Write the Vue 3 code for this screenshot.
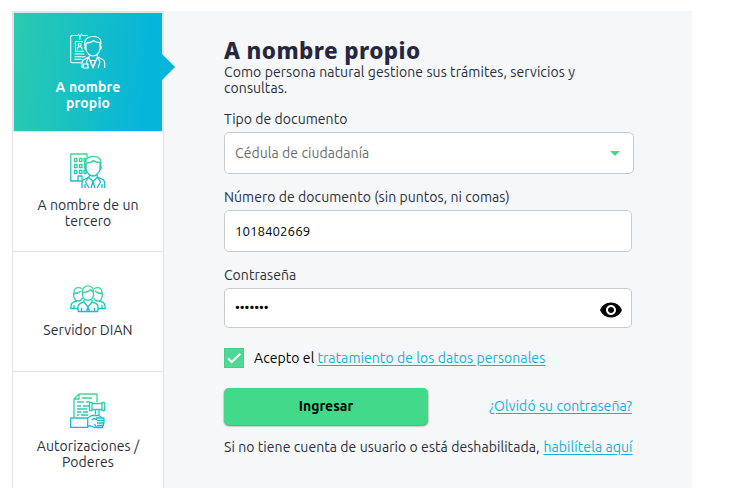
<script setup>
import { ref } from 'vue';

const tabs = ref([
    { id: 'propio', label: 'A nombre propio' },
    { id: 'tercero', label: 'A nombre de un tercero' },
    { id: 'servidor', label: 'Servidor DIAN' },
    { id: 'poderes', label: 'Autorizaciones / Poderes' }
]);

const activeTab = ref('propio');
const documento = ref('1018402669');
const clave = ref('1234567');
const showClave = ref(false);
const acepto = ref(true);
</script>

<template>
    <div class="panel">
        <svg class="defs" width="0" height="0">
            <linearGradient id="icon-grad" gradientUnits="userSpaceOnUse" x1="0" y1="0" x2="0" y2="36">
                <stop offset="0" stop-color="#43d98b" />
                <stop offset="1" stop-color="#0ab8dc" />
            </linearGradient>
        </svg>

        <nav class="tabs">
            <button v-for="tab in tabs" :key="tab.id" class="tab" :class="[tab.id, { active: tab.id === activeTab }]" @click="activeTab = tab.id">
                <svg class="tab-icon" viewBox="0 0 36 36">
                    <template v-if="tab.id === 'propio'">
                        <path d="M8 2.5H2Q.7 2.5 .7 4v24.5q0 1.2 1.3 1.2h9.5M12 2.5h5.5M8 .7l2 2.8 2-2.8M9.9 3.5v3" />
                        <path d="M13 8.5H5.5v9.7h8.3M4.5 21h10M4.5 23.7h11M4.5 26.4h8" />
                        <path d="M7.3 16.5q0-2.7 2.4-2.7t2.4 2.7M9.7 10.3q1.4 0 1.4 1.5t-1.4 1.5-1.4-1.5 1.4-1.5z" />
                        <path d="M15.500 14c-2-4-1-10 7-10.5 7-.5 9.500 3 8 10.500M16 10c5 0 6-1 7.500-2.500 1.500 1.500 4 2 6.500 2M16 10v6c.5 4 4 7 7 7s6.500-3 7-7v-6.500M16 13c-2 0-1.5 4 .5 4M30 13c2 0 1.5 4-.5 4" />
                        <path d="M12 35v-5q0-3 3-4l4-2 1-2.500M34.700 35v-5q0-3-3-4l-4-2-1-2.500M18.500 24l4.500 11 4.500-11M18.500 24l-2 5 2 6M27.500 24l2.500 5-2 6M20.500 27.500h5l-2.500 7zM13.500 31h4.500v4h-4.500z" />
                    </template>
                    <template v-else-if="tab.id === 'tercero'">
                        <path d="M17 4V1H.8v27H12" />
                        <path d="M4.5 5.5H7v3H4.5zM9.5 5.5H12v3H9.5zM14 5.5h2v3h-2zM4.5 11.5H7v3H4.5zM9.5 11.5H12v3H9.5zM14 11.5h1.500v3H14M4.5 17.5H7v3H4.5zM9.5 17.5H12v3H9.5zM14 17.5h2v3h-2zM8 28v-5h4v4" />
                        <path d="M15.500 14c-2-4-1-10 7-10.5 7-.5 9.500 3 8 10.500M16 10c5 0 6-1 7.500-2.500 1.500 1.500 4 2 6.500 2M16 10v6c.5 4 4 7 7 7s6.500-3 7-7v-6.500M16 13c-2 0-1.5 4 .5 4M30 13c2 0 1.5 4-.5 4" />
                        <path d="M12 35v-5q0-3 3-4l4-2 1-2.500M34.700 35v-5q0-3-3-4l-4-2-1-2.500M18.500 24l4.500 4.500 4.500-4.500M18.500 24l-3 5 3.500 6M27.500 24l3 5-3.500 6M23 28.500l-2 6.500M23 28.500l2 6.500M15 31v4M32 31v4" />
                    </template>
                    <template v-else-if="tab.id === 'servidor'">
                        <path d="M12.500 13V9.500c0-7.500 11-7.500 11 0V13c-1 7-10 7-11 0zM12.500 10.500c4 0 6-1 8-3l3 3" />
                        <path d="M12 6.500C5 4 3.500 7.500 3.800 14c.5 6 7 6.500 8.500 2M4 11.500c3 0 5-.5 7-2.500M24 6.500c7-2.500 8.500 1 8.200 7.500-.5 6-7 6.500-8.500 2M32 11.500c-3 0-5-.5-7-2.500" />
                        <path d="M8 29.500V25c0-3 2-4 6-5v-2M28 29.500V25c0-3-2-4-6-5v-2M8 29.500h20M14 20l4 5 4-5M18 25l-1.500 4.500M18 25l1.500 4.500M11.500 26v3M24.500 26v3" />
                        <path d="M7 19C2 20 .8 21.500 .8 26.500H8M29 19c5 1 6.200 2.500 6.200 7.500H28M4 23v3M32 23v3" />
                    </template>
                    <template v-else>
                        <path d="M4 24V6l5-5h18v8M4 6h5V1M12 5h10M7 9h7M16 9h4M7 13h4M13 13h7M7 16h10M7 19h4M13 19h5M7 22h2M11 22h7" />
                        <path d="M19.500 9.500h2.500v8h-2.500zM32 9.500h2.700v8H32zM22 10.500h10v6H22zM25.500 16.500v5M29 16.500v6" />
                        <path d="M.7 25h17v9.300H.7zM17.700 25l4-2.500h7l3 2M17.700 33h3l5 1.800M22 27c2-2 4-1 5 0" />
                        <path d="M26 25h8v2.500h-7M27 27.500h7V30h-7M27 30h6.500v2.500H27M27 32.500h5.500v2h-6L24.500 31" />
                    </template>
                </svg>
                <span class="tab-label">{{ tab.label }}</span>
            </button>
        </nav>

        <main class="content">
            <h1>A nombre propio</h1>
            <p class="intro">Como persona natural gestione sus trámites, servicios y consultas.</p>

            <label class="label">Tipo de documento</label>
            <div class="field select">
                <span class="select-value">Cédula de ciudadanía</span>
                <svg class="arrow" viewBox="0 0 10 5"><path d="M0 0h10L5 5z" /></svg>
            </div>

            <label class="label" for="documento">Número de documento (sin puntos, ni comas)</label>
            <div class="field">
                <input id="documento" v-model="documento" class="input numero" type="text" />
            </div>

            <label class="label" for="clave">Contraseña</label>
            <div class="field password">
                <input id="clave" v-model="clave" class="input" :type="showClave ? 'text' : 'password'" />
                <svg class="eye" viewBox="0 0 24 24" @click="showClave = !showClave">
                    <path d="M12 4.500C7 4.500 2.730 7.610 1 12c1.730 4.390 6 7.500 11 7.500s9.270-3.110 11-7.500c-1.730-4.390-6-7.500-11-7.500zM12 17c-2.760 0-5-2.240-5-5s2.240-5 5-5 5 2.240 5 5-2.240 5-5 5zm0-8c-1.660 0-3 1.340-3 3s1.340 3 3 3 3-1.340 3-3-1.340-3-3-3z" />
                </svg>
            </div>

            <div class="accept">
                <span class="check" @click="acepto = !acepto">
                    <svg v-if="acepto" viewBox="0 0 20 20"><path d="M3.500 10.500l4 4L17 5.200" /></svg>
                </span>
                <span class="accept-text">Acepto el</span>
                <a class="accept-link" href="#">tratamiento de los datos personales</a>
            </div>

            <div class="actions">
                <button class="submit">Ingresar</button>
                <a class="forgot" href="#">¿Olvidó su contraseña?</a>
            </div>

            <p class="enable"><span>Si no tiene cuenta de usuario o está deshabilitada,</span><a href="#">habilítela aquí</a></p>
        </main>
    </div>
</template>

<style>
body {
    background: #fff;
    overflow: hidden;
}
</style>

<style scoped>
.panel {
    box-sizing: border-box;
    display: flex;
    width: 680px;
    height: 477px;
    margin: 11px 0 0 12px;
    background: #f5f7f9;
    overflow: hidden;
    font-family: Ubuntu, "Noto Sans", sans-serif;
    font-size: 14px;
    line-height: 16px;
    letter-spacing: 0.07px;
    color: #2b2e3b;
}

.defs {
    position: absolute;
}

.tabs {
    box-sizing: border-box;
    flex: none;
    width: 152px;
    height: 481px;
    border: 1px solid #e1e5ea;
    border-top: 0;
    background: #fff;
}

.tab {
    box-sizing: border-box;
    position: relative;
    display: flex;
    flex-direction: column;
    align-items: center;
    width: 150px;
    height: 120px;
    padding: 21px 20px 0;
    border: 0;
    border-bottom: 1px solid #e1e5ea;
    background: #fff;
    font: inherit;
    letter-spacing: inherit;
    color: inherit;
}

.tab:first-child {
    height: 121px;
    padding-top: 20px;
}

.tab-icon {
    width: 36px;
    height: 36px;
    fill: none;
    stroke: url(#icon-grad);
    stroke-width: 1.3;
    stroke-linejoin: round;
}

.tab-label {
    margin-top: 8px;
}

.tab.servidor .tab-icon {
    margin-top: 9px;
}

.tab.servidor .tab-label {
    margin-top: 4px;
}

.tab.poderes .tab-label {
    margin-top: 9px;
}

.tab.active {
    padding-right: 30px;
    padding-left: 30px;
    border: 1px solid #e1e5ea;
    border-top-width: 2px;
    background: linear-gradient(95deg, #2bcbae, #05b5da 88%);
    color: #fff;
    font-weight: bold;
}

.tab.active .tab-icon {
    stroke: #fff;
    stroke-width: 1.1;
}

.tab.active .tab-label {
    width: 80px;
    margin-top: 10px;
    letter-spacing: 0.15px;
}

.tab.active::after {
    content: "";
    position: absolute;
    top: 41px;
    right: -13px;
    border: 13px solid transparent;
    border-right: 0;
    border-left-color: #05b5da;
}

.content {
    flex: none;
    width: 410px;
    padding: 27px 0 0 60px;
}

h1 {
    margin: 0;
    font-family: "Noto Sans", sans-serif;
    font-size: 22.5px;
    font-weight: 800;
    line-height: 26px;
    letter-spacing: 0.4px;
    color: #26273f;
}

p {
    margin: 0;
}

.intro {
    width: 380px;
    letter-spacing: 0.08px;
}

.label {
    display: block;
    width: max-content;
    margin-top: 15px;
    margin-bottom: 5px;
    letter-spacing: 0.05px;
}

.field {
    box-sizing: border-box;
    display: flex;
    align-items: center;
    width: 408px;
    height: 42px;
    padding: 0 8px 0 10px;
    border: 1px solid #c9cccd;
    border-radius: 5px;
    background: #fff;
}

.field.select {
    justify-content: space-between;
    width: 410px;
    padding-right: 13px;
    color: #6c6c6c;
}

.field.password {
    height: 40px;
}

.arrow {
    width: 10px;
    height: 5px;
    fill: #43d98b;
}

.input {
    flex: 1;
    min-width: 0;
    padding: 0;
    border: 0;
    outline: 0;
    background: none;
    font: inherit;
    font-size: 13.33px;
    color: #000;
}

.input.numero {
    padding-top: 2px;
}

.eye {
    width: 24px;
    height: 24px;
    margin-top: 4px;
}

.accept {
    display: flex;
    align-items: center;
    height: 20px;
    margin-top: 20px;
    color: #000;
}

.check {
    box-sizing: border-box;
    width: 20px;
    height: 20px;
    margin-right: 10px;
    border: 1px solid #45cf88;
    background: #4fd893;
}

.check svg {
    display: block;
    width: 18px;
    height: 18px;
    fill: none;
    stroke: #fff;
    stroke-width: 2.3;
}

.accept-link {
    margin-left: 3px;
}

a {
    color: #10b3da;
    text-underline-offset: 2px;
}

.actions {
    display: flex;
    align-items: center;
    justify-content: space-between;
    width: 408px;
    height: 37px;
    margin-top: 20px;
}

.submit {
    width: 204px;
    height: 37px;
    padding: 0 0 2px;
    border: 0;
    border-radius: 5px;
    background: #43d98b;
    box-shadow: 0 1px 2px rgba(0, 0, 0, 0.55);
    font: inherit;
    font-weight: bold;
    color: #000;
}

.forgot {
    margin-top: -2px;
}

.enable {
    display: flex;
    justify-content: space-between;
    width: 408.5px;
    margin-top: 14px;
    white-space: nowrap;
}
</style>
